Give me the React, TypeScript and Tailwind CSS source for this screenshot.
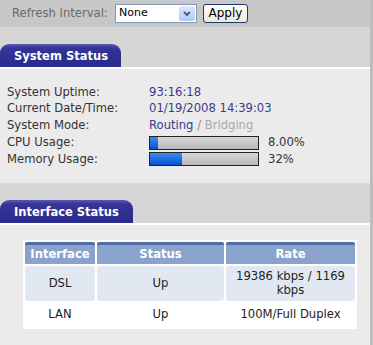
import React from "react";

const stripesDark =
  "bg-[repeating-linear-gradient(to_bottom,#cbcbcb_0px,#cbcbcb_1px,#c3c3c3_1px,#c3c3c3_2px)]";
const stripesLight =
  "bg-[repeating-linear-gradient(to_bottom,#dadada_0px,#dadada_1px,#d2d2d2_1px,#d2d2d2_2px)]";

const Tab = ({ title, width }: { title: string; width: string }) => (
  <div
    className={`${width} h-[23px] rounded-t-[9px] bg-[linear-gradient(to_bottom,#5a5ab4_0px,#34349a_4px,#2a2a8a_100%)] pl-[14px] pt-[5px] text-[11.5px] font-bold leading-[14px] text-white`}
  >
    {title}
  </div>
);

const Bar = ({ pct }: { pct: number }) => (
  <div className="h-[14px] w-[110px] border border-[#222] bg-[linear-gradient(to_bottom,#d8d8d8,#b8b8b8)]">
    <div
      className="h-full bg-[linear-gradient(to_bottom,#3a8cf0,#0a4fd0)]"
      style={{ width: `${pct}%` }}
    />
  </div>
);

export default function App() {
  const rows: [string, React.ReactNode][] = [
    ["System Uptime:", <span className="text-[#3a3a8a]">93:16:18</span>],
    ["Current Date/Time:", <span className="text-[#3a3a8a]">01/19/2008 14:39:03</span>],
    [
      "System Mode:",
      <span>
        <span className="text-[#3a3a8a]">Routing</span>
        <span className="text-[#888]"> / </span>
        <span className="text-[#aaa]">Bridging</span>
      </span>,
    ],
  ];

  return (
    <div className="flex h-[345px] w-[373px] overflow-hidden bg-[#bdbdbd] font-['DejaVu_Sans',Verdana,sans-serif] text-[11.6px] text-[#333]">
      <div className="flex w-[370px] flex-col">
        {/* refresh bar */}
        <div className={`${stripesDark} flex h-[27px] items-center pl-[12px]`}>
          <span className="w-[103px] text-[#6a6a6a]">Refresh Interval:</span>
          <div className="flex h-[19px] w-[82px] items-center justify-between border border-[#7f9db9] bg-white pl-[3px] pr-[1px] text-[11px] text-black">
            <span>None</span>
            <div className="flex h-[15px] w-[16px] items-center justify-center rounded-[2px] bg-[linear-gradient(to_bottom,#dfe8fb,#b4c8f2)]">
              <svg width="8" height="6" viewBox="0 0 8 6">
                <path d="M1 1 L4 4 L7 1" stroke="#4d6185" strokeWidth="2" fill="none" />
              </svg>
            </div>
          </div>
          <button className="ml-[6px] h-[19px] w-[45px] rounded-[3px] border border-[#1c3a70] bg-[linear-gradient(to_bottom,#ffffff,#ece9d8)] text-[12px] leading-[15px] text-black">
            Apply
          </button>
        </div>

        {/* system status */}
        <div className={`${stripesLight} pt-[17px]`}>
          <Tab title="System Status" width="w-[121px]" />
        </div>
        <div className="border-t-[2px] border-white bg-[#ebebeb] pb-[15px] pl-[7px] pt-[15px]">
          {rows.map(([label, value]) => (
            <div key={label} className="flex h-[16.75px] items-center">
              <span className="w-[142px]">{label}</span>
              {value}
            </div>
          ))}
          <div className="flex h-[16.75px] items-center">
            <span className="w-[142px]">CPU Usage:</span>
            <Bar pct={7} />
            <span className="ml-[9px]">8.00%</span>
          </div>
          <div className="flex h-[16.75px] items-center">
            <span className="w-[142px]">Memory Usage:</span>
            <Bar pct={30} />
            <span className="ml-[9px]">32%</span>
          </div>
        </div>

        {/* interface status */}
        <div className={`${stripesLight} pt-[17px]`}>
          <Tab title="Interface Status" width="w-[133px]" />
        </div>
        <div className="flex-1 border-t-[2px] border-white bg-[#ebebeb] pl-[23px] pt-[15px]">
          <table className="w-[334px] border-separate border-spacing-x-[2px] border-spacing-y-[2px] bg-white text-center">
            <thead>
              <tr className="h-[22px] text-white">
                <th className="w-[70px] rounded-t-[2px] border-t-[3px] border-[#4f6da3] bg-[#8aa3cc] font-bold">Interface</th>
                <th className="w-[127px] rounded-t-[2px] border-t-[3px] border-[#4f6da3] bg-[#8aa3cc] font-bold">Status</th>
                <th className="rounded-t-[2px] border-t-[3px] border-[#4f6da3] bg-[#8aa3cc] font-bold">Rate</th>
              </tr>
            </thead>
            <tbody className="text-[#222]">
              <tr className="h-[35px]">
                <td className="rounded-[3px] bg-[#e2e8f1]">DSL</td>
                <td className="rounded-[3px] bg-[#e2e8f1]">Up</td>
                <td className="rounded-[3px] bg-[#e2e8f1] px-[8px] leading-[14px]">19386 kbps / 1169 kbps</td>
              </tr>
              <tr className="h-[24px]">
                <td>LAN</td>
                <td>Up</td>
                <td>100M/Full Duplex</td>
              </tr>
            </tbody>
          </table>
        </div>
      </div>
    </div>
  );
}
